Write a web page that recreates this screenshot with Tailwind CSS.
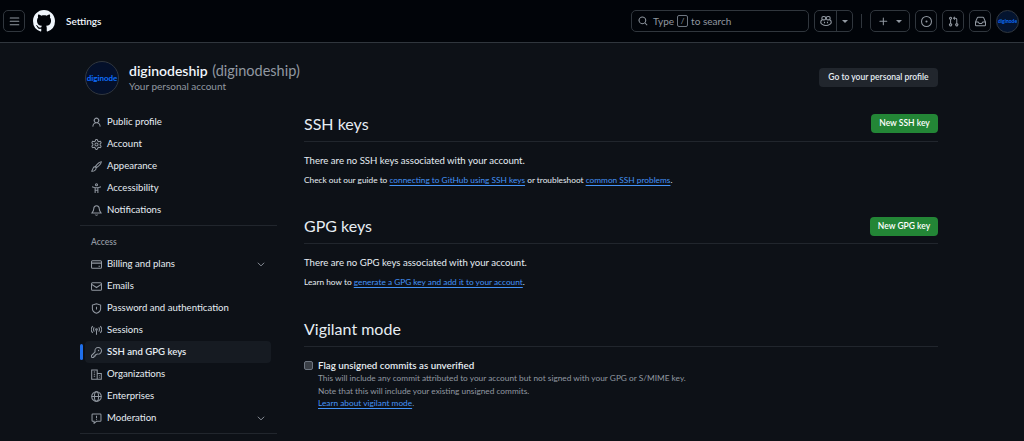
<!DOCTYPE html>
<html lang="en">
<head>
  <meta charset="UTF-8">
  <title>SSH and GPG keys</title>
  <script src="https://cdn.jsdelivr.net/npm/@tailwindcss/browser@4"></script>
</head>
<body class="bg-[#0d1117] text-[#e6edf3] font-['Lato',sans-serif] h-[441px] overflow-hidden text-[9.6px]">

<!-- Header -->
<header class="h-[43px] bg-[#010409] border-b border-[#30363d] flex items-center pl-[3px] pr-[5px]">
  <button class="w-[22px] h-[22px] border border-[#30363d] rounded-[5px] flex items-center justify-center text-[#9198a1]">
    <svg class="w-[11px] h-[11px] fill-current" viewBox="0 0 16 16"><path d="M1 2.75A.75.75 0 0 1 1.75 2h12.5a.75.75 0 0 1 0 1.5H1.75A.75.75 0 0 1 1 2.75Zm0 5A.75.75 0 0 1 1.75 7h12.5a.75.75 0 0 1 0 1.5H1.75A.75.75 0 0 1 1 7.75ZM1.75 12h12.5a.75.75 0 0 1 0 1.5H1.75a.75.75 0 0 1 0-1.5Z"/></svg>
  </button>
  <svg class="w-[22px] h-[22px] ml-[8px] fill-[#f0f6fc]" viewBox="0 0 16 16"><path d="M8 0c4.42 0 8 3.58 8 8a8.013 8.013 0 0 1-5.45 7.59c-.4.08-.55-.17-.55-.38 0-.27.01-1.13.01-2.2 0-.75-.25-1.23-.54-1.48 1.78-.2 3.65-.88 3.65-3.95 0-.88-.31-1.59-.82-2.15.08-.2.36-1.02-.08-2.12 0 0-.67-.22-2.2.82-.64-.18-1.32-.27-2-.27-.68 0-1.36.09-2 .27-1.53-1.03-2.2-.82-2.2-.82-.44 1.1-.16 1.92-.08 2.12-.51.56-.82 1.28-.82 2.15 0 3.06 1.86 3.75 3.64 3.95-.23.2-.44.55-.51 1.07-.46.21-1.61.55-2.33-.66-.15-.24-.6-.83-1.23-.82-.67.01-.27.38.01.53.34.19.73.9.82 1.13.16.45.68 1.31 2.69.94 0 .67.01 1.3.01 1.49 0 .21-.15.45-.55.38A7.995 7.995 0 0 1 0 8c0-4.42 3.58-8 8-8Z"/></svg>
  <span class="ml-[11px] text-[10px] font-semibold text-[#f0f6fc]">Settings</span>

  <div class="ml-auto w-[178px] h-[22px] border border-[#30363d] rounded-[5px] flex items-center pl-[6px] text-[10px] text-[#9198a1]">
    <svg class="w-[10px] h-[10px] fill-current" viewBox="0 0 16 16"><path d="M10.68 11.74a6 6 0 0 1-7.922-8.982 6 6 0 0 1 8.982 7.922l3.04 3.04a.749.749 0 0 1-.326 1.275.749.749 0 0 1-.734-.215ZM11.5 7a4.499 4.499 0 1 0-8.997 0A4.499 4.499 0 0 0 11.5 7Z"/></svg>
    <span class="ml-[5px]">Type</span>
    <span class="mx-[3px] w-[11px] h-[12px] border border-[#6e7681] rounded-[2px] flex items-center justify-center text-[8px]">/</span>
    <span>to search</span>
  </div>

  <div class="ml-[5px] w-[39px] h-[22px] border border-[#30363d] rounded-[5px] flex text-[#9198a1]">
    <div class="w-[22px] flex items-center justify-center border-r border-[#30363d]">
      <svg class="w-[12px] h-[12px]" viewBox="0 0 16 16" fill="none" stroke="currentColor" stroke-width="1.5"><path d="M3 6.5C1.5 7 1 8 1 9.5c0 2 3 4.5 7 4.5s7-2.5 7-4.5c0-1.500-.5-2.500-2-3"/><rect x="2.500" y="2" width="5" height="4.500" rx="2"/><rect x="8.500" y="2" width="5" height="4.500" rx="2"/><path d="M6 9v2M10 9v2"/></svg>
    </div>
    <div class="flex-1 flex items-center justify-center">
      <span class="border-x-[3px] border-t-[3px] border-x-transparent border-t-[#9198a1]"></span>
    </div>
  </div>

  <span class="ml-[8px] w-px h-[14px] bg-[#30363d]"></span>

  <div class="ml-[8px] w-[40px] h-[22px] border border-[#30363d] rounded-[5px] flex items-center pl-[7px] gap-[7px] text-[#9198a1]">
    <svg class="w-[11px] h-[11px] fill-current" viewBox="0 0 16 16"><path d="M7.750 2a.75.75 0 0 1 .75.75V7h4.250a.75.75 0 0 1 0 1.500H8.500v4.250a.75.75 0 0 1-1.500 0V8.500H2.750a.75.75 0 0 1 0-1.500H7V2.750A.75.75 0 0 1 7.750 2Z"/></svg>
    <span class="border-x-[3px] border-t-[3px] border-x-transparent border-t-[#9198a1]"></span>
  </div>

  <div class="ml-[5px] w-[22px] h-[22px] border border-[#30363d] rounded-[5px] flex items-center justify-center text-[#9198a1]">
    <svg class="w-[11px] h-[11px] fill-current" viewBox="0 0 16 16"><path d="M8 9.500a1.500 1.500 0 1 0 0-3 1.500 1.500 0 0 0 0 3Z"/><path d="M8 0a8 8 0 1 1 0 16A8 8 0 0 1 8 0ZM1.500 8a6.500 6.500 0 1 0 13 0 6.500 6.500 0 0 0-13 0Z"/></svg>
  </div>
  <div class="ml-[5px] w-[22px] h-[22px] border border-[#30363d] rounded-[5px] flex items-center justify-center text-[#9198a1]">
    <svg class="w-[11px] h-[11px] fill-current" viewBox="0 0 16 16"><path d="M1.500 3.250a2.250 2.250 0 1 1 3 2.122v5.256a2.251 2.251 0 1 1-1.500 0V5.372A2.250 2.250 0 0 1 1.500 3.250Zm5.677-.177L9.573.677A.25.25 0 0 1 10 .854V2.500h1A2.500 2.500 0 0 1 13.500 5v5.628a2.251 2.251 0 1 1-1.500 0V5a1 1 0 0 0-1-1h-1v1.646a.25.25 0 0 1-.427.177L7.177 3.427a.25.25 0 0 1 0-.354ZM3.750 2.500a.75.75 0 1 0 0 1.500.75.75 0 0 0 0-1.500Zm0 9.500a.75.75 0 1 0 0 1.500.75.75 0 0 0 0-1.500Zm8.250.75a.75.75 0 1 0 1.500 0 .75.75 0 0 0-1.500 0Z"/></svg>
  </div>
  <div class="ml-[5px] w-[22px] h-[22px] border border-[#30363d] rounded-[5px] flex items-center justify-center text-[#9198a1]">
    <svg class="w-[11px] h-[11px] fill-current" viewBox="0 0 16 16"><path d="M2.800 2.060A1.750 1.750 0 0 1 4.410 1h7.180c.7 0 1.333.417 1.610 1.060l2.740 6.395c.04.093.06.194.06.295v4.500A1.750 1.750 0 0 1 14.250 15H1.750A1.750 1.750 0 0 1 0 13.250v-4.500c0-.101.02-.202.06-.295Zm1.610.44a.25.25 0 0 0-.23.152L1.887 8H4.750a.75.75 0 0 1 .6.3L6.625 10h2.750l1.275-1.700a.75.75 0 0 1 .6-.3h2.863L11.820 2.652a.25.25 0 0 0-.23-.152Zm10.090 7h-2.875l-1.275 1.700a.75.75 0 0 1-.6.3h-3.500a.75.75 0 0 1-.6-.3L4.375 9.500H1.500v3.750c0 .138.112.25.25.25h12.500a.25.25 0 0 0 .25-.25Z"/></svg>
  </div>
  <div class="ml-[5px] w-[23px] h-[23px] rounded-full bg-[#04142f] border border-[#30363d] flex items-center justify-center overflow-hidden">
    <span class="text-[5px] font-bold text-[#0d6efd] leading-none">diginode</span>
  </div>
</header>

<div class="pl-[80px] pr-[86px]">
  <!-- Account title row -->
  <div class="h-[68px] pl-[5px] flex items-center pt-[1px]">
    <div class="w-[34px] h-[34px] rounded-full bg-[#04102a] border border-[#30363d] flex items-center justify-center overflow-hidden">
      <span class="text-[8px] font-bold text-[#0d6efd] leading-none">diginode</span>
    </div>
    <div class="ml-[10px]">
      <div class="text-[14px] leading-[18px] font-semibold text-[#f0f6fc]">diginodeship <span class="ml-[1px] text-[14.5px] font-normal text-[#9198a1]">(diginodeship)</span></div>
      <div class="text-[10px] leading-[13px] text-[#9198a1]">Your personal account</div>
    </div>
    <a class="ml-auto w-[119px] h-[19px] rounded-[4px] bg-[#21262d] flex items-center justify-center text-[8.5px] font-semibold text-[#e6edf3]">Go to your personal profile</a>
  </div>

  <div class="flex">
    <!-- Sidebar -->
    <nav class="w-[191px] shrink-0 pl-[5px] text-[#e6edf3]">
      <div class="h-[22px] flex items-center pl-[6px] gap-[5px]">
        <svg class="w-[11px] h-[11px] fill-[#9198a1]" viewBox="0 0 16 16"><path d="M10.561 8.073a6.005 6.005 0 0 1 3.432 5.142.75.75 0 1 1-1.498.07 4.500 4.500 0 0 0-8.990 0 .75.75 0 1 1-1.498-.07 6.004 6.004 0 0 1 3.431-5.142 3.999 3.999 0 1 1 5.123 0ZM10.500 5a2.500 2.500 0 1 0-5 0 2.500 2.500 0 0 0 5 0Z"/></svg>
        <span>Public profile</span>
      </div>
      <div class="h-[22px] flex items-center pl-[6px] gap-[5px]">
        <svg class="w-[11px] h-[11px] fill-[#9198a1]" viewBox="0 0 16 16"><path d="M8 0a8.2 8.2 0 0 1 .701.031C9.444.095 9.99.645 10.16 1.29l.288 1.107c.018.066.079.158.212.224.231.114.454.243.668.386.123.082.233.09.299.071l1.103-.303c.644-.176 1.392.021 1.82.63.27.385.506.792.704 1.218.315.675.111 1.422-.364 1.891l-.814.806c-.049.048-.098.147-.088.294.016.257.016.515 0 .772-.01.147.038.246.088.294l.814.806c.475.469.679 1.216.364 1.891a7.977 7.977 0 0 1-.704 1.217c-.428.61-1.176.807-1.82.63l-1.102-.302c-.067-.019-.177-.011-.3.071a5.909 5.909 0 0 1-.668.386c-.133.066-.194.158-.211.224l-.29 1.106c-.168.646-.715 1.196-1.458 1.26a8.006 8.006 0 0 1-1.402 0c-.743-.064-1.289-.614-1.458-1.26l-.289-1.106c-.018-.066-.079-.158-.212-.224a5.738 5.738 0 0 1-.668-.386c-.123-.082-.233-.09-.299-.071l-1.103.303c-.644.176-1.392-.021-1.82-.63a8.12 8.12 0 0 1-.704-1.218c-.315-.675-.111-1.422.363-1.891l.815-.806c.05-.048.098-.147.088-.294a6.214 6.214 0 0 1 0-.772c.01-.147-.038-.246-.088-.294l-.815-.806C.635 6.045.431 5.298.746 4.623a7.92 7.92 0 0 1 .704-1.217c.428-.61 1.176-.807 1.82-.63l1.102.302c.067.019.177.011.3-.071.214-.143.437-.272.668-.386.133-.066.194-.158.211-.224l.29-1.106C6.009.645 6.556.095 7.299.03 7.53.01 7.764 0 8 0Zm-.571 1.525c-.036.003-.108.036-.137.146l-.289 1.105c-.147.561-.549.967-.998 1.189-.173.086-.34.183-.5.29-.417.278-.97.423-1.529.27l-1.103-.303c-.109-.03-.175.016-.195.045-.22.312-.412.644-.573.99-.014.031-.021.11.059.19l.815.806c.411.406.562.957.53 1.456a4.709 4.709 0 0 0 0 .582c.032.499-.119 1.05-.53 1.456l-.815.806c-.081.08-.073.159-.059.19.162.346.353.677.573.989.02.03.085.076.195.046l1.102-.303c.56-.153 1.113-.008 1.53.27.161.107.328.204.501.29.447.222.85.629.997 1.189l.289 1.105c.029.109.101.143.137.146a6.6 6.6 0 0 0 1.142 0c.036-.003.108-.036.137-.146l.289-1.105c.147-.561.549-.967.998-1.189.173-.086.34-.183.5-.29.417-.278.97-.423 1.529-.27l1.103.303c.109.029.175-.016.195-.045.22-.313.411-.644.573-.99.014-.031.021-.11-.059-.19l-.815-.806c-.411-.406-.562-.957-.53-1.456a4.709 4.709 0 0 0 0-.582c-.032-.499.119-1.05.53-1.456l.815-.806c.081-.08.073-.159.059-.19a6.464 6.464 0 0 0-.573-.989c-.02-.03-.085-.076-.195-.046l-1.102.303c-.56.153-1.113.008-1.53-.27a4.44 4.44 0 0 0-.501-.29c-.447-.222-.85-.629-.997-1.189l-.289-1.105c-.029-.11-.101-.143-.137-.146a6.6 6.6 0 0 0-1.142 0ZM11 8a3 3 0 1 1-6 0 3 3 0 0 1 6 0ZM9.500 8a1.500 1.500 0 1 0-3.001.001A1.500 1.500 0 0 0 9.500 8Z"/></svg>
        <span>Account</span>
      </div>
      <div class="h-[22px] flex items-center pl-[6px] gap-[5px]">
        <svg class="w-[11px] h-[11px] fill-none stroke-[#9198a1] stroke-[1.5]" viewBox="0 0 16 16"><path d="M15 1c-2.500.2-6 3.500-8.500 6.800l1.700 1.700C11.500 7 14.800 3.500 15 1ZM6 8.200c-2 0-3 1.300-3.200 3L1 14.800c2.500.3 6.500-.8 6.500-5Z"/></svg>
        <span>Appearance</span>
      </div>
      <div class="h-[22px] flex items-center pl-[6px] gap-[5px]">
        <svg class="w-[11px] h-[11px] fill-none stroke-[#9198a1] stroke-[1.5]" viewBox="0 0 16 16"><circle cx="8" cy="2.500" r="1.500"/><path d="M1.500 5.500 6 7v7.500M14.500 5.500 10 7v7.500M6 7h4M6 10.500h4"/></svg>
        <span>Accessibility</span>
      </div>
      <div class="h-[22px] flex items-center pl-[6px] gap-[5px]">
        <svg class="w-[11px] h-[11px] fill-none stroke-[#9198a1] stroke-[1.5]" viewBox="0 0 16 16"><path d="M8 1C5.500 1 4 3 4 5.500c0 3-1.500 4.500-2.500 6h13c-1-1.500-2.500-3-2.500-6C12 3 10.500 1 8 1ZM6 14c.5 1 3.500 1 4 0"/></svg>
        <span>Notifications</span>
      </div>

      <div class="h-px bg-[#21262d] mt-[4px] -ml-[5px] -mr-[6px]"></div>
      <div class="h-[23px] mt-[5px] flex items-center pl-[6px] text-[8.5px] font-semibold text-[#9198a1]">Access</div>

      <div class="h-[22px] flex items-center pl-[6px] gap-[5px] -mt-[1px] relative">
        <svg class="w-[11px] h-[11px] fill-none stroke-[#9198a1] stroke-[1.5]" viewBox="0 0 16 16"><rect x=".75" y="2.500" width="14.500" height="11" rx="1.500"/><path d="M1 6h14M11 10.500h2"/></svg>
        <span>Billing and plans</span>
        <svg class="ml-auto mr-[5px] w-[10px] h-[10px] fill-none stroke-[#9198a1] stroke-[1.5]" viewBox="0 0 16 16"><path d="m3 6 5 5 5-5"/></svg>
      </div>
      <div class="h-[22px] flex items-center pl-[6px] gap-[5px]">
        <svg class="w-[11px] h-[11px] fill-none stroke-[#9198a1] stroke-[1.5]" viewBox="0 0 16 16"><rect x=".75" y="2.500" width="14.500" height="11" rx="1.500"/><path d="m1 5 7 4.500L15 5"/></svg>
        <span>Emails</span>
      </div>
      <div class="h-[22px] flex items-center pl-[6px] gap-[5px]">
        <svg class="w-[11px] h-[11px] fill-none stroke-[#9198a1] stroke-[1.5]" viewBox="0 0 16 16"><path d="M8 1 2 3v5c0 3.500 3 6 6 7 3-1 6-3.500 6-7V3Z"/><path d="M8 5.500v4"/></svg>
        <span>Password and authentication</span>
      </div>
      <div class="h-[22px] flex items-center pl-[6px] gap-[5px]">
        <svg class="w-[11px] h-[11px] fill-none stroke-[#9198a1] stroke-[1.5]" viewBox="0 0 16 16"><circle cx="8" cy="6.500" r="1.200"/><path d="M8 8v6M4.800 3.500c-1.500 1.500-1.500 4.500 0 6M11.200 3.500c1.500 1.500 1.500 4.500 0 6M2.500 1.500c-2.700 3-2.700 7 0 10M13.500 1.500c2.700 3 2.700 7 0 10"/></svg>
        <span>Sessions</span>
      </div>
      <div class="h-[22px] flex items-center pl-[6px] gap-[5px] bg-[#161b22] rounded-[4px] relative font-semibold">
        <span class="absolute -left-[5px] top-[3px] w-[3px] h-[16px] rounded-full bg-[#1f6feb]"></span>
        <svg class="w-[11px] h-[11px] fill-[#9198a1]" viewBox="0 0 16 16"><path d="M10.500 0a5.499 5.499 0 1 1-1.288 10.848l-.932.932a.749.749 0 0 1-.53.22H7v.75a.749.749 0 0 1-.22.53l-.5.5a.749.749 0 0 1-.53.22H5v.75a.749.749 0 0 1-.22.53l-.5.5a.749.749 0 0 1-.53.22h-2A1.750 1.750 0 0 1 0 14.250v-2c0-.199.079-.389.22-.53l4.932-4.932A5.500 5.500 0 0 1 10.500 0Zm-4 5.500c-.001.431.069.86.205 1.269a.75.75 0 0 1-.181.768L1.500 12.560v1.690c0 .138.112.25.25.25h1.690l.06-.06v-1.190a.75.75 0 0 1 .75-.75h1.190l.06-.06v-1.190a.75.75 0 0 1 .75-.75h1.190l1.023-1.025a.75.75 0 0 1 .768-.18A4 4 0 1 0 6.500 5.500ZM11 6a1 1 0 1 1 0-2 1 1 0 0 1 0 2Z"/></svg>
        <span>SSH and GPG keys</span>
      </div>
      <div class="h-[22px] flex items-center pl-[6px] gap-[5px]">
        <svg class="w-[11px] h-[11px] fill-none stroke-[#9198a1] stroke-[1.5]" viewBox="0 0 16 16"><path d="M1 15V1.500h8V15ZM9 6.500h6V15H1M4 4.500h2M4 7.500h2M4 10.500h2M11.500 9.500h1M11.500 12h1"/></svg>
        <span>Organizations</span>
      </div>
      <div class="h-[22px] flex items-center pl-[6px] gap-[5px]">
        <svg class="w-[11px] h-[11px] fill-none stroke-[#9198a1] stroke-[1.5]" viewBox="0 0 16 16"><circle cx="8" cy="8" r="7"/><ellipse cx="8" cy="8" rx="3" ry="7"/><path d="M1 8h14"/></svg>
        <span>Enterprises</span>
      </div>
      <div class="h-[22px] flex items-center pl-[6px] gap-[5px]">
        <svg class="w-[11px] h-[11px] fill-none stroke-[#9198a1] stroke-[1.5]" viewBox="0 0 16 16"><path d="M2.500 1.500h11c.6 0 1 .4 1 1v8.500c0 .6-.4 1-1 1H8l-3.500 3V12h-2c-.6 0-1-.4-1-1V2.500c0-.6.4-1 1-1Z"/><path d="M8 4v3.500M8 9v1"/></svg>
        <span>Moderation</span>
        <svg class="ml-auto mr-[5px] w-[10px] h-[10px] fill-none stroke-[#9198a1] stroke-[1.5]" viewBox="0 0 16 16"><path d="m3 6 5 5 5-5"/></svg>
      </div>
      <div class="h-px bg-[#21262d] mt-[4px] -ml-[5px] -mr-[6px]"></div>
    </nav>

    <!-- Main -->
    <main class="flex-1 ml-[33px] min-w-0">
      <div class="h-[31px] flex items-center justify-between border-b border-[#21262d] pb-[5px]">
        <h2 class="text-[16px] leading-none">SSH keys</h2>
        <a class="h-[19px] w-[67px] rounded-[4px] bg-[#238636] flex items-center justify-center text-[8.5px] font-semibold text-white">New SSH key</a>
      </div>
      <p class="mt-[12px] leading-[13px]">There are no SSH keys associated with your account.</p>
      <p class="mt-[7px] leading-[13px] text-[8.3px]">Check out our guide to <a class="text-[#4493f8] underline underline-offset-2">connecting to GitHub using SSH keys</a> or troubleshoot <a class="text-[#4493f8] underline underline-offset-2">common SSH problems</a>.</p>

      <div class="h-[30px] mt-[27px] flex items-center justify-between border-b border-[#21262d] pb-[5px]">
        <h2 class="text-[16px] leading-none">GPG keys</h2>
        <a class="h-[19px] w-[68px] rounded-[4px] bg-[#238636] flex items-center justify-center text-[8.5px] font-semibold text-white">New GPG key</a>
      </div>
      <p class="mt-[12px] leading-[13px]">There are no GPG keys associated with your account.</p>
      <p class="mt-[7px] leading-[13px] text-[8.3px]">Learn how to <a class="text-[#4493f8] underline underline-offset-2">generate a GPG key and add it to your account</a>.</p>

      <div class="h-[30px] mt-[28px] flex items-center border-b border-[#21262d] pb-[5px]">
        <h2 class="text-[16px] leading-none">Vigilant mode</h2>
      </div>
      <div class="mt-[12px] flex">
        <span class="w-[9px] h-[9px] mt-[2px] rounded-[2px] bg-[#3a3f46] border border-[#6e7681] shrink-0"></span>
        <div class="ml-[5px]">
          <div class="font-semibold text-[9.8px] leading-[13px]">Flag unsigned commits as unverified</div>
          <div class="text-[8.3px] leading-[12.5px] text-[#9198a1]">This will include any commit attributed to your account but not signed with your GPG or S/MIME key.</div>
          <div class="text-[8.3px] leading-[12.5px] text-[#9198a1]">Note that this will include your existing unsigned commits.</div>
          <div class="text-[8.3px] leading-[12.5px] text-[#9198a1]"><a class="text-[#4493f8] underline underline-offset-2">Learn about vigilant mode</a>.</div>
        </div>
      </div>
    </main>
  </div>
</div>
</body>
</html>
